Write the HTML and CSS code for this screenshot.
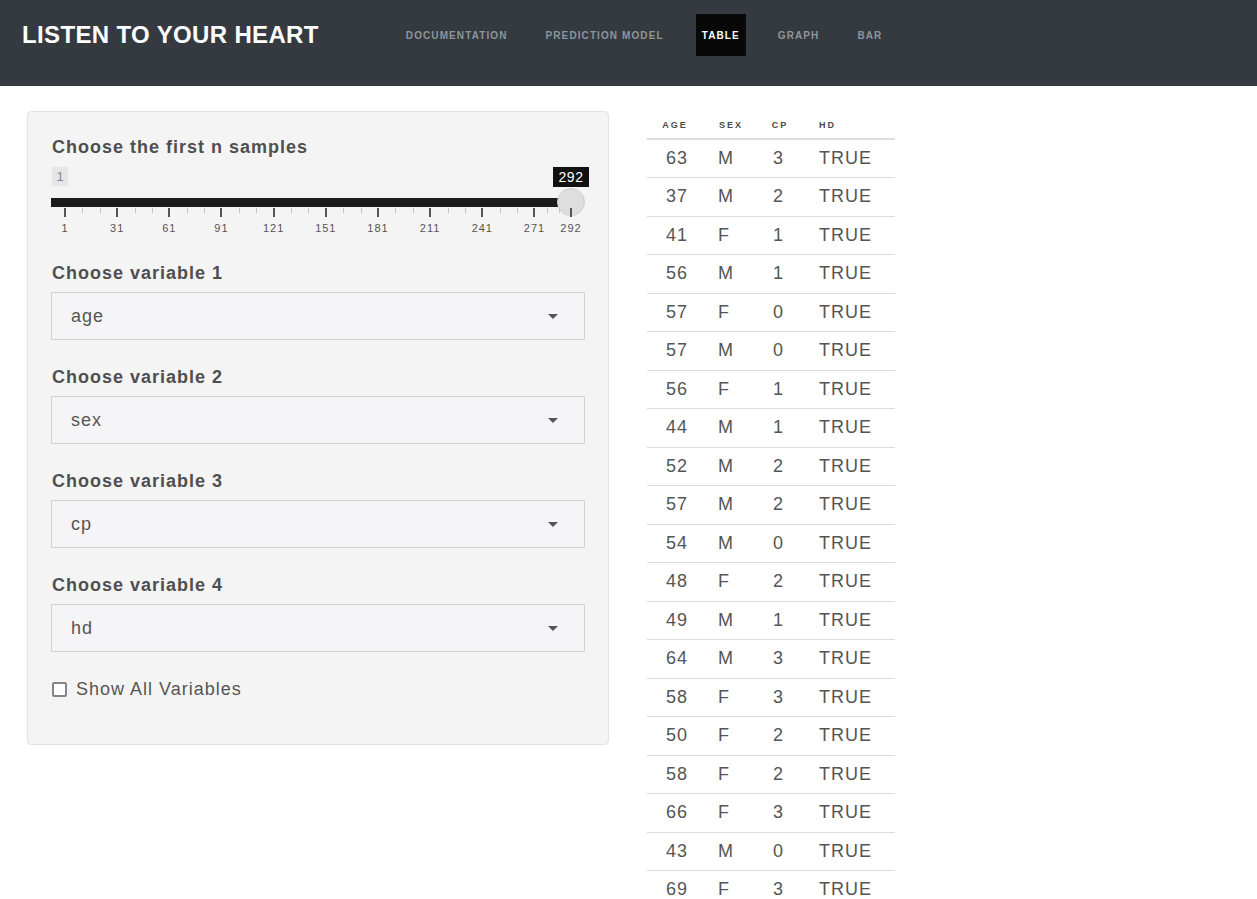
FILE: index.html
```html
<!DOCTYPE html>
<html>
<head>
<meta charset="utf-8">
<link rel="stylesheet" href="styles.css">
</head>
<body>
<header class="navbar">
  <div class="brand">LISTEN TO YOUR HEART</div>
  <nav class="nav">
    <a class="nav-link">DOCUMENTATION</a>
    <a class="nav-link">PREDICTION MODEL</a>
    <a class="nav-link active">TABLE</a>
    <a class="nav-link">GRAPH</a>
    <a class="nav-link">BAR</a>
  </nav>
</header>
<main class="content">
  <aside class="panel">
    <div class="group slider-group">
      <label class="label">Choose the first n samples</label>
      <div class="slider">
        <span class="min-label">1</span>
        <span class="max-label">292</span>
        <div class="bar"></div>
        <div class="handle"></div>
        <div class="grid" id="grid"></div>
      </div>
    </div>
    <div class="group">
      <label class="label">Choose variable 1</label>
      <div class="select"><span>age</span><i class="caret"></i></div>
    </div>
    <div class="group">
      <label class="label">Choose variable 2</label>
      <div class="select"><span>sex</span><i class="caret"></i></div>
    </div>
    <div class="group">
      <label class="label">Choose variable 3</label>
      <div class="select"><span>cp</span><i class="caret"></i></div>
    </div>
    <div class="group">
      <label class="label">Choose variable 4</label>
      <div class="select"><span>hd</span><i class="caret"></i></div>
    </div>
    <div class="check-row">
      <span class="checkbox"></span>
      <span class="check-text">Show All Variables</span>
    </div>
  </aside>
  <section class="table-wrap">
    <table class="data">
      <thead>
        <tr><th class="c1">AGE</th><th class="c2">SEX</th><th class="c3">CP</th><th class="c4">HD</th></tr>
      </thead>
      <tbody id="rows"></tbody>
    </table>
  </section>
</main>
<script>
var data = [[63,"M",3],[37,"M",2],[41,"F",1],[56,"M",1],[57,"F",0],[57,"M",0],[56,"F",1],[44,"M",1],[52,"M",2],[57,"M",2],[54,"M",0],[48,"F",2],[49,"M",1],[64,"M",3],[58,"F",3],[50,"F",2],[58,"F",2],[66,"F",3],[43,"M",0],[69,"F",3]];
var tb = document.getElementById("rows");
data.forEach(function(r){
  var tr = document.createElement("tr");
  tr.innerHTML = '<td class="c1">'+r[0]+'</td><td class="c2">'+r[1]+'</td><td class="c3">'+r[2]+'</td><td class="c4">TRUE</td>';
  tb.appendChild(tr);
});
var grid = document.getElementById("grid");
var majors = [1,31,61,91,121,151,181,211,241,271,292];
function pos(v){ return (v-1)/291*100; }
for (var i=0;i<majors.length;i++){
  var v = majors[i];
  var t = document.createElement("span");
  t.className = "tick major";
  t.style.left = pos(v)+"%";
  grid.appendChild(t);
  var l = document.createElement("span");
  l.className = "tick-label";
  l.style.left = pos(v)+"%";
  l.textContent = v;
  grid.appendChild(l);
  if (i < majors.length-1){
    var n = majors[i+1];
    for (var k=1;k<3;k++){
      var m = document.createElement("span");
      m.className = "tick minor";
      m.style.left = pos(v + (n-v)*k/3)+"%";
      grid.appendChild(m);
    }
  }
}
</script>
</body>
</html>
```

FILE: styles.css
```css
* { box-sizing: border-box; }
html, body { margin: 0; padding: 0; background: #fff; }
body {
  font-family: "Liberation Sans", Arial, sans-serif;
  color: #555;
  letter-spacing: 1px;
  width: 1257px;
  height: 899px;
  overflow: hidden;
}

.navbar {
  height: 86px;
  background: #353a41;
  display: flex;
  align-items: flex-start;
}
.brand {
  color: #fff;
  font-weight: bold;
  font-size: 24px;
  letter-spacing: 0.35px;
  padding-left: 22px;
  line-height: 28px;
  margin-top: 21px;
}
.nav {
  display: flex;
  gap: 26px;
  margin-left: 81px;
  margin-top: 14px;
}
.nav-link {
  display: block;
  height: 42px;
  line-height: 41px;
  padding: 1px 6px 0 6px;
  font-size: 10px;
  font-weight: bold;
  letter-spacing: 1.1px;
  color: #8f949a;
}
.nav-link.active {
  background: #080808;
  color: #fff;
}

.content {
  display: flex;
  align-items: flex-start;
  padding: 25px 0 0 27px;
  gap: 38px;
}

.panel {
  width: 582px;
  background: #f4f4f4;
  border: 1px solid #e3e3e3;
  border-radius: 4px;
  padding: 25px 23px 45px 23px;
}
.label {
  display: block;
  font-size: 18px;
  font-weight: bold;
  line-height: 20px;
  margin: 0 0 9px 1px;
  color: #4f4f4f;
}
.group { margin-bottom: 27px; }
.slider-group { margin-bottom: 22px; }
.slider-group .label { margin-bottom: 10px; }

.slider {
  position: relative;
  width: 534px;
  height: 74px;
}
.min-label {
  position: absolute;
  left: 1px;
  top: 0;
  width: 16px;
  height: 19px;
  line-height: 19px;
  text-align: center;
  background: #e6e6e6;
  color: #888;
  font-size: 13px;
  letter-spacing: 0;
}
.max-label {
  position: absolute;
  left: 502px;
  top: 0;
  width: 36px;
  height: 20px;
  line-height: 20px;
  text-align: center;
  background: #111;
  color: #fff;
  font-size: 14px;
  letter-spacing: 0.6px;
}
.bar {
  position: absolute;
  left: 0;
  top: 31px;
  width: 521px;
  height: 9px;
  background: #1b1b1b;
}
.handle {
  position: absolute;
  left: 506px;
  top: 21px;
  width: 28px;
  height: 28px;
  border-radius: 50%;
  background: #dedede;
  border: 1px solid #cfcfcf;
}
.grid {
  position: absolute;
  left: 14px;
  top: 41px;
  width: 506px;
  height: 30px;
}
.tick {
  position: absolute;
  top: 0;
  width: 1px;
}
.tick.major { height: 9px; background: #555; width: 2px; margin-left: -1px; }
.tick.minor { height: 5px; background: #c4c4c4; }
.tick-label {
  position: absolute;
  top: 13px;
  transform: translateX(-50%);
  font-size: 11px;
  letter-spacing: 1px;
  color: #555;
  line-height: 14px;
  white-space: nowrap;
}

.select {
  width: 534px;
  height: 48px;
  border: 1px solid #cfd2d9;
  background: #f5f5f7;
  display: flex;
  align-items: center;
  justify-content: space-between;
  padding: 0 26px 0 19px;
  font-size: 18px;
  color: #555;
}
.caret {
  width: 0;
  height: 0;
  border-left: 5px solid transparent;
  border-right: 5px solid transparent;
  border-top: 5px solid #555;
}

.check-row {
  display: flex;
  align-items: center;
  height: 20px;
  margin-top: 0;
}
.checkbox {
  width: 15px;
  height: 15px;
  border: 2px solid #858585;
  border-radius: 2px;
  background: #fff;
  margin: 0 9px 0 1px;
}
.check-text { font-size: 18px; color: #555; }

.table-wrap { padding-top: 1px; }
.data {
  border-collapse: collapse;
  width: 248px;
  table-layout: fixed;
}
.data th {
  font-size: 9px;
  font-weight: bold;
  letter-spacing: 2px;
  color: #4a4a4a;
  height: 27px;
  border-bottom: 2px solid #dcdcdc;
  padding: 0;
}
.data td {
  font-size: 18px;
  color: #555;
  height: 38.5px;
  border-bottom: 1px solid #dcdcdc;
  padding: 0;
}
.c1 { width: 60px; text-align: center; }
.c2 { width: 53px; text-align: left; padding-left: 11px !important; }
.c3 { width: 40px; text-align: center; padding-right: 3px !important; }
.c4 { text-align: left; padding-left: 19px !important; }
th.c1 { padding-right: 4px !important; }
th.c2 { padding-left: 12px !important; }
th.c3 { padding-right: 0 !important; }
```
